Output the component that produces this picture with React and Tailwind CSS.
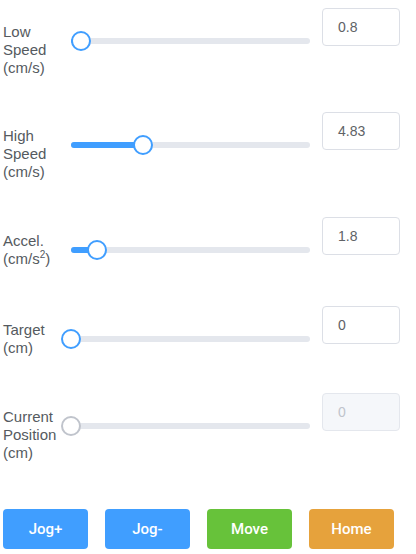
import React from 'react';

const rows = [
  { label: ['Low', 'Speed', '(cm/s)'], value: '0.8', pos: 10, h: 'h-[104px]' },
  { label: ['High', 'Speed', '(cm/s)'], value: '4.83', pos: 72, h: 'h-[105px]' },
  { label: ['Accel.', 'cm/s2'], value: '1.8', pos: 26, h: 'h-[89px]' },
  { label: ['Target', '(cm)'], value: '0', pos: 0, h: 'h-[87px]' },
  { label: ['Current', 'Position', '(cm)'], value: '0', pos: 0, h: 'h-[110px]', disabled: true },
];

const Label = ({ lines }) => (
  <div className="w-[68px] shrink-0 pt-[15px] text-[15px] leading-[18px] text-[#555a60]">
    {lines.map((l, i) =>
      l === 'cm/s2' ? (
        <div key={i}>
          (cm/s<span className="relative -top-[6px] text-[10px] leading-none">2</span>)
        </div>
      ) : (
        <div key={i}>{l}</div>
      )
    )}
  </div>
);

const Slider = ({ pos, disabled }) => (
  <div className="relative flex-1 mt-[30px] h-[6px] rounded-full bg-[#e4e7ed]">
    {!disabled && pos > 0 && (
      <div className="absolute left-0 top-0 h-[6px] rounded-full bg-[#409eff]" style={{ width: pos }} />
    )}
    <div
      className={
        'absolute top-[-7px] w-[20px] h-[20px] -ml-[10px] rounded-full bg-white border-2 ' +
        (disabled ? 'border-[#c0c4cc]' : 'border-[#409eff]')
      }
      style={{ left: pos }}
    />
  </div>
);

export default function App() {
  return (
    <div className="w-[416px] h-[554px] bg-white pl-[3px] pr-[16px] pt-[8px]" style={{ fontFamily: '"Liberation Sans", Arial, sans-serif' }}>
      {rows.map((r, i) => (
        <div key={i} className={'flex items-start ' + r.h}>
          <Label lines={r.label} />
          <Slider pos={r.pos} disabled={r.disabled} />
          <div
            className={
              'ml-[12px] w-[78px] h-[38px] shrink-0 rounded-[4px] border px-[15px] flex items-center text-[14px] ' +
              (r.disabled
                ? 'bg-[#f5f7fa] border-[#e4e7ed] text-[#c0c4cc]'
                : 'bg-white border-[#dcdfe6] text-[#606266]')
            }
          >
            {r.value}
          </div>
        </div>
      ))}
      <div className="flex gap-[17px] mt-[6px]" style={{ fontFamily: 'Roboto, sans-serif' }}>
        <button className="w-[85px] h-[40px] rounded-[4px] bg-[#409eff] text-white text-[15px] font-medium">Jog+</button>
        <button className="w-[85px] h-[40px] rounded-[4px] bg-[#409eff] text-white text-[15px] font-medium">Jog-</button>
        <button className="w-[85px] h-[40px] rounded-[4px] bg-[#67c23a] text-white text-[15px] font-medium">Move</button>
        <button className="w-[85px] h-[40px] rounded-[4px] bg-[#e6a23c] text-white text-[15px] font-medium">Home</button>
      </div>
    </div>
  );
}
